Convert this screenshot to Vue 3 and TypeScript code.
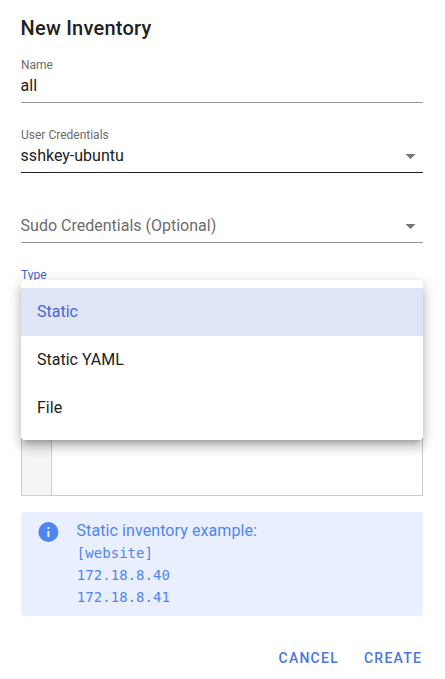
<script setup lang="ts">
import { ref } from 'vue'

interface Field {
  label: string
  value: string
  select: boolean
  strong?: boolean
}

const fields: Field[] = [
  { label: 'Name', value: 'all', select: false },
  { label: 'User Credentials', value: 'sshkey-ubuntu', select: true, strong: true },
  { label: 'Sudo Credentials (Optional)', value: '', select: true },
]

const types: string[] = ['Static', 'Static YAML', 'File']
const selected = ref<string>('Static')
const example: string[] = ['[website]', '172.18.8.40', '172.18.8.41']
</script>

<template>
  <main class="dialog">
    <h1 class="title">New Inventory</h1>

    <div v-for="f in fields" :key="f.label" class="field" :class="{ strong: f.strong }">
      <div class="label">{{ f.value ? f.label : '' }}</div>
      <div class="row">
        <span v-if="f.value" class="value">{{ f.value }}</span>
        <span v-else class="placeholder">{{ f.label }}</span>
        <svg v-if="f.select" class="arrow" viewBox="0.5 0 24 24"><path d="M7 10l5 5 5-5z" /></svg>
      </div>
    </div>

    <div class="field type">
      <div class="label">Type</div>
      <ul class="menu">
        <li
          v-for="t in types"
          :key="t"
          class="item"
          :class="{ active: t === selected }"
          @click="selected = t"
        >
          {{ t }}
        </li>
      </ul>
    </div>

    <div class="editor"><div class="gutter"></div></div>

    <section class="info">
      <svg class="info-icon" viewBox="-0.4 0 24 24">
        <path d="M13 9h-2V7h2m0 10h-2v-6h2m-1-9A10 10 0 0 0 2 12a10 10 0 0 0 10 10 10 10 0 0 0 10-10A10 10 0 0 0 12 2z" />
      </svg>
      <div>
        <div class="info-title">Static inventory example:</div>
        <div v-for="line in example" :key="line" class="code">{{ line }}</div>
      </div>
    </section>

    <footer class="actions">
      <button type="button">CANCEL</button>
      <button type="button">CREATE</button>
    </footer>
  </main>
</template>

<style>
body {
  background: #fff;
}
</style>

<style scoped>
.dialog {
  box-sizing: border-box;
  height: 679px;
  padding: 12px 22px 0 21px;
  overflow: hidden;
  font-family: Roboto, sans-serif;
  font-size: 16px;
  color: #212121;
}
.title {
  margin: 0 0 11px -0.4px;
  font-size: 20px;
  line-height: 32px;
  font-weight: 500;
  letter-spacing: 0.22px;
}
.field {
  box-sizing: border-box;
  height: 48px;
  margin-bottom: 22px;
  border-bottom: 1px solid #949494;
}
.field.strong {
  border-color: #212121;
}
.label {
  height: 20px;
  font-size: 12px;
  line-height: 20px;
  color: #6c6c6c;
}
.row {
  display: flex;
  align-items: center;
  justify-content: space-between;
  height: 22px;
  margin-left: -0.4px;
  line-height: 22px;
}
.placeholder {
  color: #6c6c6c;
}
.arrow {
  width: 24px;
  height: 24px;
  fill: #757575;
}
.type {
  position: relative;
}
.type .label {
  color: #4568cf;
}
.menu {
  position: absolute;
  top: 15px;
  left: 0;
  right: 0;
  z-index: 1;
  margin: 0;
  padding: 8px 0;
  list-style: none;
  background: #fff;
  border-radius: 4px;
  box-shadow: 0 5px 5px -3px rgba(0, 0, 0, 0.2), 0 8px 10px 1px rgba(0, 0, 0, 0.14),
    0 3px 14px 2px rgba(0, 0, 0, 0.12);
}
.item {
  height: 48px;
  padding: 0 16px;
  line-height: 48px;
}
.item.active {
  color: #4568cf;
  background: #dfe5f5;
}
.editor {
  box-sizing: border-box;
  height: 161px;
  border: 1px solid #ccc;
}
.gutter {
  box-sizing: border-box;
  width: 30px;
  height: 100%;
  background: #f5f5f5;
  border-right: 1px solid #ccc;
}
.info {
  display: flex;
  gap: 16.5px;
  height: 88px;
  margin-top: 16px;
  padding: 8px 15px;
  border-radius: 4px;
  background: #e9effe;
  color: #5085f1;
}
.info-icon {
  width: 24px;
  height: 24px;
  fill: #5085f1;
}
.info-title {
  line-height: 22px;
  letter-spacing: 0.09px;
}
.code {
  padding-left: 0.3px;
  font-family: 'DejaVu Sans Mono', monospace;
  font-size: 14px;
  line-height: 22px;
  letter-spacing: 0.04px;
}
.actions {
  display: flex;
  justify-content: flex-end;
  gap: 25px;
  margin: 24px 0.8px 0 0;
}
.actions button {
  height: 36px;
  padding: 0;
  border: 0;
  background: none;
  font: 500 14px/36px Roboto, sans-serif;
  letter-spacing: 1.25px;
  color: #4877dd;
}
</style>
